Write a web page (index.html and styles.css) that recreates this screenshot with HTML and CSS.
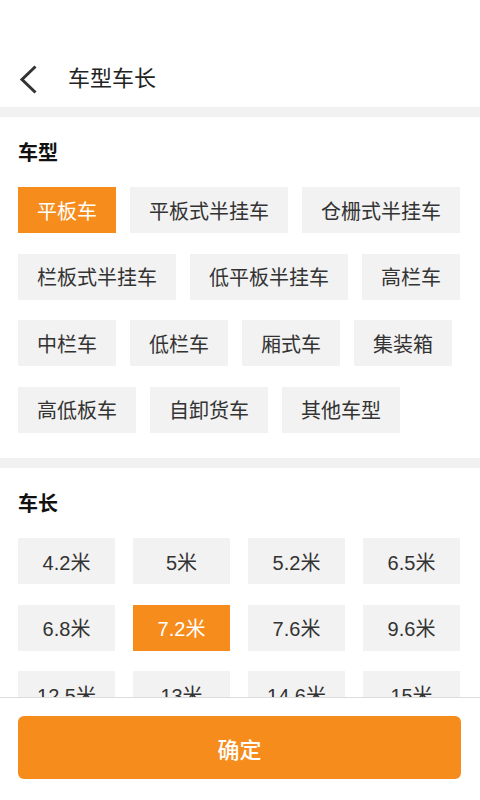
FILE: index.html
```html
<!DOCTYPE html>
<html lang="zh-CN">
<head>
<meta charset="utf-8">
<title>车型车长</title>
<link rel="stylesheet" href="styles.css">
</head>
<body>
<div class="status"></div>
<header class="nav">
  <svg class="back" width="20" height="32" viewBox="0 0 20 32" aria-hidden="true">
    <path d="M17.5 3.5 L4 16.5 L17.5 29.5" fill="none" stroke="#333" stroke-width="3" stroke-linejoin="miter"/>
  </svg>
  <h1 class="title">车型车长</h1>
</header>
<div class="band"></div>
<section class="section">
  <h2 class="label">车型</h2>
  <div class="chips">
    <span class="chip active">平板车</span>
    <span class="chip">平板式半挂车</span>
    <span class="chip">仓栅式半挂车</span>
    <span class="chip">栏板式半挂车</span>
    <span class="chip">低平板半挂车</span>
    <span class="chip">高栏车</span>
    <span class="chip">中栏车</span>
    <span class="chip">低栏车</span>
    <span class="chip">厢式车</span>
    <span class="chip">集装箱</span>
    <span class="chip">高低板车</span>
    <span class="chip">自卸货车</span>
    <span class="chip">其他车型</span>
  </div>
</section>
<div class="band"></div>
<section class="section">
  <h2 class="label">车长</h2>
  <div class="grid">
    <span class="cell">4.2米</span>
    <span class="cell">5米</span>
    <span class="cell">5.2米</span>
    <span class="cell">6.5米</span>
    <span class="cell">6.8米</span>
    <span class="cell active">7.2米</span>
    <span class="cell">7.6米</span>
    <span class="cell">9.6米</span>
    <span class="cell">12.5米</span>
    <span class="cell">13米</span>
    <span class="cell">14.6米</span>
    <span class="cell">15米</span>
    <span class="cell">16米</span>
    <span class="cell">17.5米</span>
  </div>
</section>
<footer class="bottom">
  <button class="confirm" type="button">确定</button>
</footer>
</body>
</html>
```

FILE: styles.css
```css
* { box-sizing: border-box; }
html, body { margin: 0; padding: 0; background: #fff; }
body {
  font-family: "Liberation Sans", "Noto Sans CJK SC", sans-serif;
  color: #333;
  padding-bottom: 110px;
}
.status { height: 50px; }
.nav {
  height: 57px;
  display: flex;
  align-items: center;
  padding-left: 18px;
}
.back { display: block; flex: none; }
.title {
  margin: 0 0 0 30px;
  font-size: 22px;
  font-weight: normal;
  color: #222;
  line-height: 30px;
}
.band { height: 10px; background: #f1f1f1; }
.section { padding: 22px 20px 25.5px 18px; }
.label {
  margin: 0 0 20px;
  font-size: 20px;
  line-height: 28px;
  font-weight: bold;
  color: #111;
}
.chips {
  display: flex;
  flex-wrap: wrap;
  column-gap: 14px;
  row-gap: 20.5px;
}
.chip, .cell {
  height: 46px;
  display: flex;
  align-items: center;
  justify-content: center;
  background: #f2f2f2;
  color: #333;
  font-size: 20px;
}
.chip { padding: 0 19px; }
.grid {
  display: grid;
  grid-template-columns: repeat(4, 97px);
  column-gap: 18px;
  row-gap: 20.5px;
}
.chip.active, .cell.active { background: #f68c1c; color: #fff; }
.bottom {
  position: fixed;
  left: 0; right: 0; bottom: 0;
  height: 103px;
  background: #fff;
  border-top: 1px solid #dcdcdc;
  padding: 18px 19px 0 18px;
}
.confirm {
  display: block;
  width: 100%;
  height: 63px;
  border: none;
  border-radius: 6px;
  background: #f68c1c;
  color: #fff;
  font-family: "Noto Sans CJK SC", sans-serif;
  font-size: 22px;
  font-weight: 500;
}
```
